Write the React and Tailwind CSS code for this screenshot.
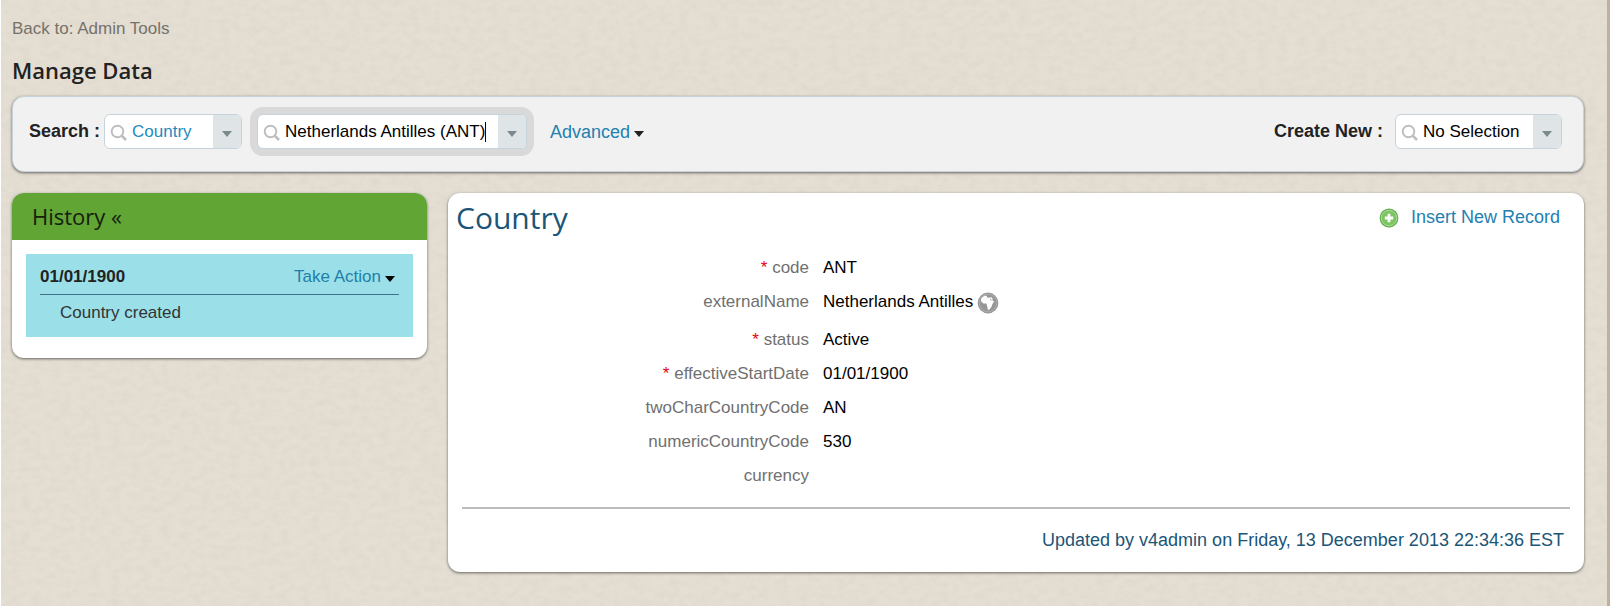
function SearchIcon() {
  return (
    <svg viewBox="0 0 18 18" className="mt-0.5 size-[18px] shrink-0" fill="none" stroke="#bdbdbd" aria-hidden="true">
      <circle cx="7.5" cy="7.5" r="5.8" strokeWidth="1.9" />
      <path d="M11.7 11.7 L16 16" strokeWidth="2.6" />
    </svg>
  );
}

function Caret({ className }) {
  return (
    <svg viewBox="0 0 10 6" className={`h-1.5 w-2.5 shrink-0 ${className}`} fill="currentColor" aria-hidden="true">
      <path d="M0 0 H10 L5 6 Z" />
    </svg>
  );
}

function SelectBox({ id, label, value, width, tone }) {
  return (
    <div className={`relative flex h-[35px] items-center overflow-hidden rounded-md border border-[#c6d3da] bg-white pl-[5px] ${width}`}>
      <SearchIcon />
      <select
        id={id}
        aria-label={label}
        className={`h-full min-w-0 flex-1 appearance-none bg-transparent pl-1 outline-none ${tone}`}
      >
        <option>{value}</option>
      </select>
      <span className="pointer-events-none flex h-full w-7 items-center justify-center bg-[#dfe5e7] pt-1">
        <Caret className="text-[#7b8b8d]" />
      </span>
    </div>
  );
}

function GlobeIcon() {
  return (
    <svg viewBox="0 0 22 22" className="size-[22px]" aria-hidden="true">
      <circle cx="11" cy="11" r="10.4" fill="#979797" />
      <circle cx="11" cy="11" r="8.8" fill="none" stroke="#b4b4b4" strokeWidth="0.8" />
      <path
        fill="#fff"
        d="M5 5.4 L8 3.6 L10 4.2 L9.8 5.6 L12.4 5.8 L14 5 L15.6 6.6 L15.4 8.6 L17.2 9.6 L15.4 12 L14.6 14.4 L12.6 17.4 L10.8 17.8 L10.2 14.6 L9.4 11.6 L6.4 11.4 L4.2 9.4 L4 7.2 Z"
      />
      <path fill="#979797" d="M12.8 6.4 L13.8 6.4 L14.8 9 L14 8.8 Z" />
    </svg>
  );
}

function AddIcon() {
  return (
    <svg viewBox="0 0 20 20" className="mt-0.5 size-5" aria-hidden="true">
      <circle cx="10" cy="10" r="9.4" fill="#5fae48" />
      <circle cx="10" cy="10" r="7.8" fill="#7cc565" stroke="#b5dfa6" strokeWidth="0.9" />
      <path d="M10 5.8 V14.2 M5.8 10 H14.2" stroke="#fff" strokeWidth="2.8" />
    </svg>
  );
}

function PaperTexture() {
  return (
    <svg className="absolute inset-0 -z-10 h-full w-full" aria-hidden="true">
      <filter id="paper" x="0" y="0" width="100%" height="100%">
        <feTurbulence type="fractalNoise" baseFrequency="0.1 0.15" numOctaves="3" seed="4" stitchTiles="stitch" />
        <feColorMatrix type="matrix" values="0 0 0 0 0.55  0 0 0 0 0.52  0 0 0 0 0.46  0.34 0 0 0 -0.12" />
      </filter>
      <rect width="100%" height="100%" filter="url(#paper)" />
    </svg>
  );
}

const fields = [
  { name: "code", value: "ANT", required: true },
  { name: "externalName", value: "Netherlands Antilles", globe: true },
  { name: "status", value: "Active", required: true },
  { name: "effectiveStartDate", value: "01/01/1900", required: true },
  { name: "twoCharCountryCode", value: "AN" },
  { name: "numericCountryCode", value: "530" },
  { name: "currency", value: "" },
];

const card = "rounded-xl shadow-[0_1px_3px_rgba(0,0,0,0.55)]";

export default function App() {
  return (
    <div className="relative isolate min-h-screen border-r-3 border-l border-r-[#bdb09c] border-l-white bg-[#e4ded3] pt-[17px] pr-[23px] pb-8 pl-[11px] font-['Liberation_Sans',Arial,sans-serif] text-[17px] leading-6 text-[#222]">
      <PaperTexture />
      <a href="#admin" className="block w-fit text-[#77716a]">Back to: Admin Tools</a>
      <h1 className="mt-3.5 font-['Open_Sans',sans-serif] text-[22px] leading-[30px] font-semibold">Manage Data</h1>

      <form className={`mt-[11px] flex h-[76px] items-start border border-[#c6d3da] bg-[#f1f1f1] pt-[17px] pr-[21px] pl-4 ${card}`}>
        <label htmlFor="search-type" className="mr-1 text-lg leading-[35px] font-bold">Search :</label>
        <SelectBox id="search-type" label="Search type" value="Country" width="w-[138px]" tone="text-[#1f8bc0]" />
        <div className="ml-[15px] flex h-[35px] w-[270px] items-center overflow-hidden rounded-md border border-[#c6d3da] bg-white pl-[5px] ring-[7px] ring-[#d9d9d9]">
          <SearchIcon />
          <input
            aria-label="Search value"
            defaultValue="Netherlands Antilles (ANT)"
            className="h-full pl-1 text-black outline-none [field-sizing:content]"
          />
          <span className="h-5 w-px bg-black" />
          <button type="button" aria-label="Show options" className="ml-auto flex h-full w-7 items-center justify-center bg-[#dfe5e7] pt-1">
            <Caret className="text-[#7b8b8d]" />
          </button>
        </div>
        <button type="button" className="ml-[23px] flex h-[35px] items-center gap-1 text-lg text-[#2380b0]">
          Advanced
          <Caret className="mt-1 text-[#222]" />
        </button>
        <label htmlFor="create-type" className="mr-3 ml-auto text-lg leading-[35px] font-bold">Create New :</label>
        <SelectBox id="create-type" label="Create new" value="No Selection" width="w-[167px]" tone="text-black" />
      </form>

      <main className="mt-[21px] flex items-start gap-[21px]">
        <aside className={`w-[415px] shrink-0 overflow-hidden bg-white ${card}`}>
          <h2 className="bg-[#61a534] pb-px pl-5 font-['Open_Sans',sans-serif] text-[22px] leading-[46px] text-[#15200d]">History «</h2>
          <div className="px-3.5 pt-3.5 pb-[21px]">
            <div className="bg-[#9be0e8] px-3.5 pt-[11px] pb-3">
              <div className="flex items-center justify-between border-b border-[#3f6f8a] pr-1 pb-[5px]">
                <strong>01/01/1900</strong>
                <button type="button" className="flex items-center gap-1 text-[#1f7fa9]">
                  Take Action
                  <Caret className="mt-1 text-black" />
                </button>
              </div>
              <p className="pt-1.5 pl-5 text-[#333]">Country created</p>
            </div>
          </div>
        </aside>

        <section className={`min-w-0 flex-1 bg-white pb-5 ${card}`}>
          <header className="flex items-start justify-between pr-6 pl-2">
            <h2 className="h-[43px] font-['Open_Sans',sans-serif] text-[30px] leading-[50px] text-[#1b5577]">Country</h2>
            <a href="#insert" className="mt-3 flex items-center gap-3 text-lg leading-6 text-[#2380b0]">
              <AddIcon />
              Insert New Record
            </a>
          </header>
          <dl className="pt-5 pb-[9px]">
            {fields.map((f) => (
              <div key={f.name} className={f.globe ? "flex h-[38px] gap-3.5" : "flex h-[34px] gap-3.5"}>
                <dt className="w-[361px] shrink-0 text-right text-[#707070]">
                  {f.required && <span className="text-red-600">* </span>}
                  {f.name}
                </dt>
                <dd className="flex h-6 items-center gap-1 text-black">
                  {f.value}
                  {f.globe && (
                    <button type="button" aria-label="Translations" className="mt-0.5">
                      <GlobeIcon />
                    </button>
                  )}
                </dd>
              </div>
            ))}
          </dl>
          <footer className="mx-3.5 border-t-2 border-[#bcbcbc] pt-[19px] pr-1.5 text-right text-lg leading-6 text-[#1b5577]">
            Updated by v4admin on Friday, 13 December 2013 22:34:36 EST
          </footer>
        </section>
      </main>
    </div>
  );
}
